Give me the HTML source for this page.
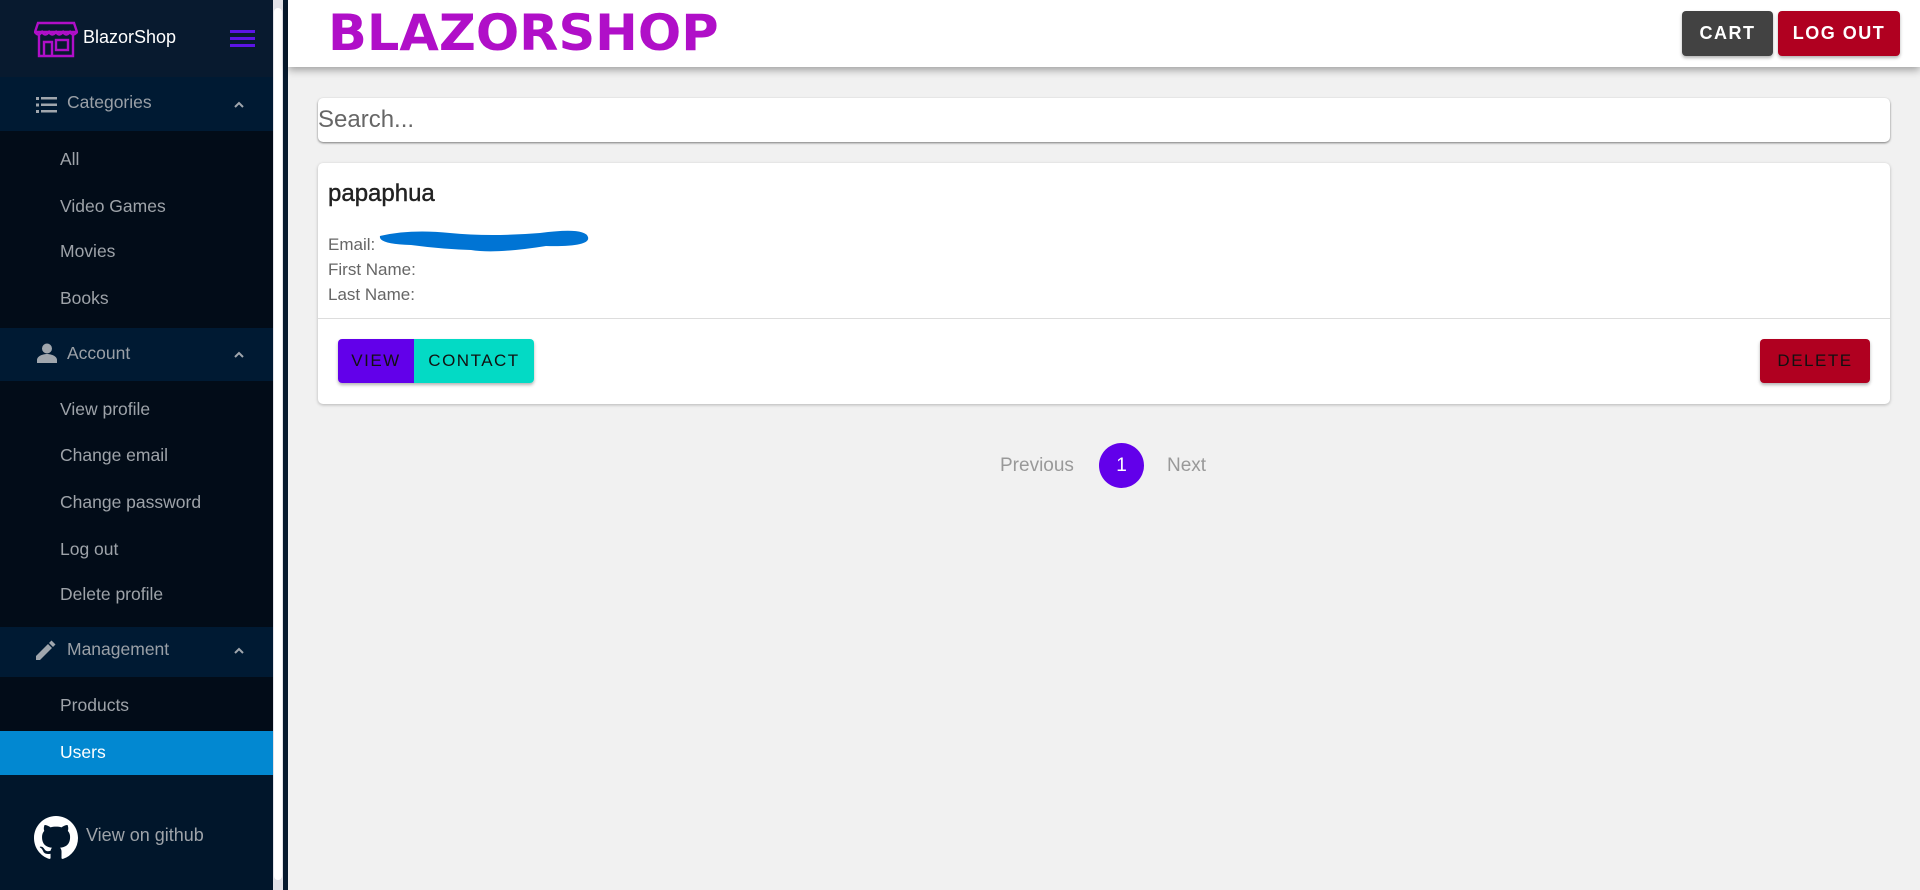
<!DOCTYPE html>
<html><head><meta charset="utf-8"><style>
*{box-sizing:border-box;margin:0;padding:0}
body{width:1920px;height:890px;overflow:hidden;background:#f1f1f1;font-family:"Liberation Sans",sans-serif;position:relative}
.side{position:absolute;left:0;top:0;width:273px;height:890px;background:#01162b}
.track{position:absolute;left:273px;top:0;width:10px;height:890px;background:#e2e2e8}
.thumb{position:absolute;left:274px;top:8px;width:8px;height:872px;background:#fff;border-radius:4px}
.edge{position:absolute;left:283px;top:0;width:5px;height:890px;background:#071a2e}
.abs{position:absolute}
.hdr{left:0;top:0;width:273px;height:77px;background:#081a2f}
.grp{left:0;width:273px;height:54px;background:#001a33}
.items{left:0;width:273px;background:#020c18}
.gt{left:67px;color:#9aa0a7;font-size:17.5px}
.it{left:60px;color:#9ea3a9;font-size:17.5px}
.chev{left:232px;width:14px;height:14px}
.top{position:absolute;left:288px;top:0;width:1632px;height:67px;background:#fff;box-shadow:0 3px 8px rgba(0,0,0,.35)}
.btn{position:absolute;color:#fff;font-weight:bold;font-size:18px;letter-spacing:1.5px;text-align:center;line-height:45px;border-radius:4px;box-shadow:0 2px 3px rgba(0,0,0,.3)}
.card{position:absolute;left:318px;width:1572px;background:#fff;border-radius:5px;box-shadow:0 1px 3px rgba(0,0,0,.25)}
.ln{position:absolute;left:328px;color:#666;font-size:17px}
</style></head><body>
<div class="side">
 <div class="abs hdr"></div>
 <svg class="abs" style="left:34px;top:20px" width="44" height="38" viewBox="0 0 44 38" fill="none" stroke="#b00fc8" stroke-width="2.4"><path d="M4 3h36l3 9H1z"/><path d="M1 12q3 5 7 0q3 5 7 0q3 5 7 0q3 5 7 0q3 5 7 0q3 5 7 0"/><path d="M5 14v22h34V14"/><path d="M10 36V22h8v14"/><rect x="22" y="20" width="12" height="10"/></svg>
 <div class="abs" style="left:83px;top:27px;color:#fff;font-size:18px">BlazorShop</div>
 <svg class="abs" style="left:230px;top:29px" width="26" height="20"><rect y="1" width="25" height="3" fill="#5c14e6"/><rect y="8" width="25" height="3" fill="#5c14e6"/><rect y="15" width="25" height="3" fill="#5c14e6"/></svg>

 <div class="abs grp" style="top:77px"></div>
 <svg class="abs" style="left:36px;top:96px" width="22" height="18" fill="#a0a6ad"><rect x="0" y="1" width="3" height="3"/><rect x="0" y="7.5" width="3" height="3"/><rect x="0" y="14" width="3" height="3"/><rect x="5" y="1" width="16" height="2.5"/><rect x="5" y="7.5" width="16" height="2.5"/><rect x="5" y="14" width="16" height="2.5"/></svg>
 <div class="abs gt" style="top:92px">Categories</div>
 <svg class="abs chev" style="top:98px" viewBox="0 0 14 14"><path d="M3 9l4-4 4 4" stroke="#a0a6ad" stroke-width="2" fill="none"/></svg>
 <div class="abs items" style="top:131px;height:197px"></div>
 <div class="abs it" style="top:149px">All</div>
 <div class="abs it" style="top:196px">Video Games</div>
 <div class="abs it" style="top:241px">Movies</div>
 <div class="abs it" style="top:288px">Books</div>

 <div class="abs grp" style="top:328px;height:53px"></div>
 <svg class="abs" style="left:37px;top:343px" width="20" height="20" fill="#a0a6ad"><circle cx="10" cy="5.5" r="5"/><path d="M0 20v-3c0-4 6-6 10-6s10 2 10 6v3z"/></svg>
 <div class="abs gt" style="top:343px">Account</div>
 <svg class="abs chev" style="top:348px" viewBox="0 0 14 14"><path d="M3 9l4-4 4 4" stroke="#a0a6ad" stroke-width="2" fill="none"/></svg>
 <div class="abs items" style="top:381px;height:246px"></div>
 <div class="abs it" style="top:399px">View profile</div>
 <div class="abs it" style="top:445px">Change email</div>
 <div class="abs it" style="top:492px">Change password</div>
 <div class="abs it" style="top:539px">Log out</div>
 <div class="abs it" style="top:584px">Delete profile</div>

 <div class="abs grp" style="top:627px;height:50px"></div>
 <svg class="abs" style="left:36px;top:640px" width="20" height="20" fill="#a0a6ad"><path d="M0 16v4h4L16 8l-4-4z"/><path d="M13 3l4 4 2.5-2.5-4-4z"/></svg>
 <div class="abs gt" style="top:639px">Management</div>
 <svg class="abs chev" style="top:644px" viewBox="0 0 14 14"><path d="M3 9l4-4 4 4" stroke="#a0a6ad" stroke-width="2" fill="none"/></svg>
 <div class="abs items" style="top:677px;height:54px"></div>
 <div class="abs it" style="top:695px">Products</div>
 <div class="abs" style="left:0;top:731px;width:273px;height:44px;background:#0288d1"></div>
 <div class="abs it" style="top:742px;color:#fff">Users</div>
 <svg class="abs" style="left:34px;top:816px" width="44" height="44" viewBox="0 0 16 16"><path fill="#fff" d="M8 0C3.580 0 0 3.58 0 8c0 3.54 2.29 6.530 5.470 7.59.4.07.55-.17.55-.38 0-.19-.01-.82-.01-1.490-2.010.37-2.530-.49-2.690-.94-.09-.23-.48-.94-.82-1.130-.28-.15-.68-.52-.01-.53.63-.01 1.080.58 1.230.82.72 1.210 1.870.87 2.330.66.07-.52.28-.87.51-1.070-1.780-.2-3.640-.89-3.640-3.950 0-.87.31-1.590.82-2.150-.08-.2-.36-1.020.08-2.120 0 0 .67-.21 2.200.82.64-.18 1.320-.27 2-.27.68 0 1.360.09 2 .27 1.530-1.040 2.200-.82 2.200-.82.44 1.100.16 1.920.08 2.120.51.56.82 1.270.82 2.150 0 3.070-1.870 3.750-3.650 3.950.29.25.54.73.54 1.480 0 1.070-.01 1.930-.01 2.200 0 .21.15.46.55.38A8.013 8.013 0 0016 8c0-4.420-3.580-8-8-8z"/></svg>
 <div class="abs" style="left:86px;top:825px;color:#9ea3a9;font-size:18px">View on github</div>
</div>
<div class="track"></div><div class="thumb"></div><div class="edge"></div>

<div class="top">
 <div class="abs" style="left:40px;top:4px;color:#b00fc8;font-family:'DejaVu Sans',sans-serif;font-weight:bold;font-size:50px;transform:scaleX(1.02);transform-origin:left">BLAZORSHOP</div>
</div>
<div class="btn" style="left:1682px;top:11px;width:91px;background:#424242">CART</div>
<div class="btn" style="left:1778px;top:11px;width:122px;background:#b00020">LOG OUT</div>

<div class="card" style="top:98px;height:44px;box-shadow:0 1px 2px rgba(0,0,0,.5)"></div>
<div class="abs" style="left:318px;top:106px;color:#666;font-size:24px">Search...</div>

<div class="card" style="top:163px;height:241px"></div>
<div class="abs" style="left:328px;top:180px;color:#222;font-size:24px;-webkit-text-stroke:0.4px #222">papaphua</div>
<div class="ln" style="top:235px">Email:</div>
<svg class="abs" style="left:376px;top:228px" width="220" height="34"><path d="M4 8q30-7 70-3t90 0q45-6 48 4t-42 9q-50 8-75 4-30-1-60-5Q2 16 4 8z" fill="#0074d4"/></svg>
<div class="ln" style="top:260px">First Name:</div>
<div class="ln" style="top:285px">Last Name:</div>
<div class="abs" style="left:318px;top:318px;width:1572px;height:1px;background:#ddd"></div>
<div class="abs" style="left:338px;top:339px;width:196px;height:44px;border-radius:4px;overflow:hidden;box-shadow:0 2px 3px rgba(0,0,0,.3)">
 <div class="abs" style="left:0;top:0;width:76px;height:44px;background:#6200ea;color:#111;font-size:17px;letter-spacing:1.5px;text-align:center;line-height:44px">VIEW</div>
 <div class="abs" style="left:76px;top:0;width:120px;height:44px;background:#03dac5;color:#111;font-size:17px;letter-spacing:1.5px;text-align:center;line-height:44px">CONTACT</div>
</div>
<div class="abs" style="left:1760px;top:339px;width:110px;height:44px;border-radius:4px;background:#b00020;color:#111;font-size:17px;letter-spacing:1.5px;text-align:center;line-height:44px;box-shadow:0 2px 3px rgba(0,0,0,.3)">DELETE</div>

<div class="abs" style="left:1000px;top:455px;color:#999;font-size:19px">Previous</div>
<div class="abs" style="left:1099px;top:443px;width:45px;height:45px;border-radius:50%;background:#6200ea;color:#fff;font-size:19px;text-align:center;line-height:45px">1</div>
<div class="abs" style="left:1167px;top:455px;color:#999;font-size:19px">Next</div>
</body></html>
